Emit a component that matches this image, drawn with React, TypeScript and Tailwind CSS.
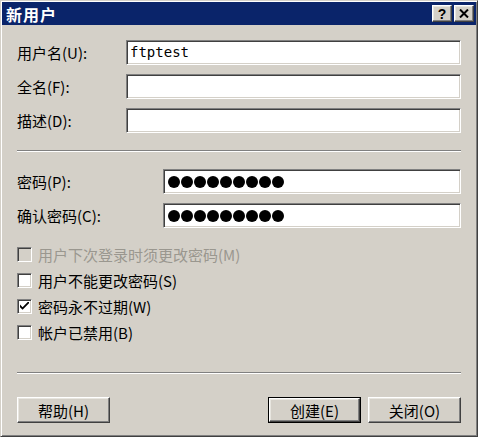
import React from "react";

const font = { fontFamily: '"SimSun", "Noto Sans CJK SC", "Liberation Sans", sans-serif' };

const sunken =
  "border border-t-[#808080] border-l-[#808080] border-b-white border-r-white shadow-[inset_1px_1px_#404040,inset_-1px_-1px_#d4d0c8]";
const raised =
  "border border-t-white border-l-white border-b-[#404040] border-r-[#404040] shadow-[inset_-1px_-1px_#808080,inset_1px_1px_#e8e6e0]";

function Field({ label, value, left }: { label: string; value?: string; left: string }) {
  return (
    <div className="flex items-center">
      <div className={`${left} shrink-0 text-[15px] leading-none`}>{label}</div>
      <div className={`h-[25px] flex-1 bg-white ${sunken} flex items-center px-[3px]`}>
        {value && (
          <span className="text-[14px]" style={{ fontFamily: '"DejaVu Sans Mono", monospace' }}>
            {value}
          </span>
        )}
      </div>
    </div>
  );
}

function Password({ label }: { label: string }) {
  return (
    <div className="flex items-center">
      <div className="w-[146px] shrink-0 text-[15px] leading-none">{label}</div>
      <div className={`h-[25px] flex-1 bg-white ${sunken} flex items-center gap-[1px] pl-[4px]`}>
        {[0, 1, 2, 3, 4, 5, 6, 7, 8].map((i) => (
          <span key={i} className="w-[12px] h-[12px] rounded-full bg-black" />
        ))}
      </div>
    </div>
  );
}

function Check({ label, checked, disabled }: { label: string; checked?: boolean; disabled?: boolean }) {
  return (
    <div className="flex items-center h-[26px]">
      <div
        className={`w-[15px] h-[15px] ${sunken} ${disabled ? "bg-[#d4d0c8]" : "bg-white"} flex items-center justify-center`}
      >
        {checked && (
          <svg width="9" height="9" viewBox="0 0 7 7">
            <path d="M0 2 L0 4 L2 6 L7 1 L7 -1 L2 4 Z" fill="black" />
          </svg>
        )}
      </div>
      <span className={`ml-[6px] text-[15px] leading-none ${disabled ? "text-[#9a978f]" : "text-black"}`}>
        {label}
      </span>
    </div>
  );
}

function Btn({ label, def }: { label: string; def?: boolean }) {
  return (
    <div className={def ? "border border-black" : ""}>
      <div
        className={`${def ? "w-[91px] h-[24px]" : "w-[93px] h-[26px]"} bg-[#d4d0c8] ${raised} flex items-center justify-center text-[15px] leading-none`}
      >
        {label}
      </div>
    </div>
  );
}

function TitleBtn({ children }: { children: React.ReactNode }) {
  return (
    <div className={`w-[20px] h-[17px] bg-[#d4d0c8] ${raised} flex items-center justify-center`}>{children}</div>
  );
}

export default function App() {
  return (
    <div
      className="w-[478px] h-[437px] bg-[#d4d0c8] text-black border border-t-[#d4d0c8] border-l-[#d4d0c8] border-b-[#404040] border-r-[#404040] shadow-[inset_1px_1px_white,inset_-1px_-1px_#808080] p-[1px] flex flex-col overflow-hidden"
      style={font}
    >
      <div className="h-[23px] bg-[#0a246a] flex items-center pl-[4px] pr-[2px]">
        <span className="text-white font-bold text-[16px] tracking-[1px]">新用户</span>
        <div className="ml-auto flex gap-[2px]">
          <TitleBtn>
            <span className="font-bold text-[14px] leading-none" style={{ fontFamily: '"Liberation Sans", sans-serif' }}>
              ?
            </span>
          </TitleBtn>
          <TitleBtn>
            <svg width="10" height="9" viewBox="0 0 10 9">
              <path d="M1 0.5 L9 8.5 M9 0.5 L1 8.5" stroke="black" strokeWidth="2" />
            </svg>
          </TitleBtn>
        </div>
      </div>

      <div className="flex-1 flex flex-col px-[15px]">
        <div className="flex flex-col gap-[9px] pt-[15px]">
          <Field label="用户名(U):" value="ftptest" left="w-[109px]" />
          <Field label="全名(F):" left="w-[109px]" />
          <Field label="描述(D):" left="w-[109px]" />
        </div>

        <div className="mt-[17px] h-[2px] border-t border-t-[#808080] border-b border-b-white" />

        <div className="flex flex-col gap-[9px] mt-[17px]">
          <Password label="密码(P):" />
          <Password label="确认密码(C):" />
        </div>

        <div className="flex flex-col mt-[13px]">
          <Check label="用户下次登录时须更改密码(M)" disabled />
          <Check label="用户不能更改密码(S)" />
          <Check label="密码永不过期(W)" checked />
          <Check label="帐户已禁用(B)" />
        </div>

        <div className="mt-[27px] h-[2px] border-t border-t-[#808080] border-b border-b-white" />

        <div className="flex mt-[23px] items-center">
          <Btn label="帮助(H)" />
          <div className="ml-auto flex gap-[7px]">
            <Btn label="创建(E)" def />
            <Btn label="关闭(O)" />
          </div>
        </div>
      </div>
    </div>
  );
}
